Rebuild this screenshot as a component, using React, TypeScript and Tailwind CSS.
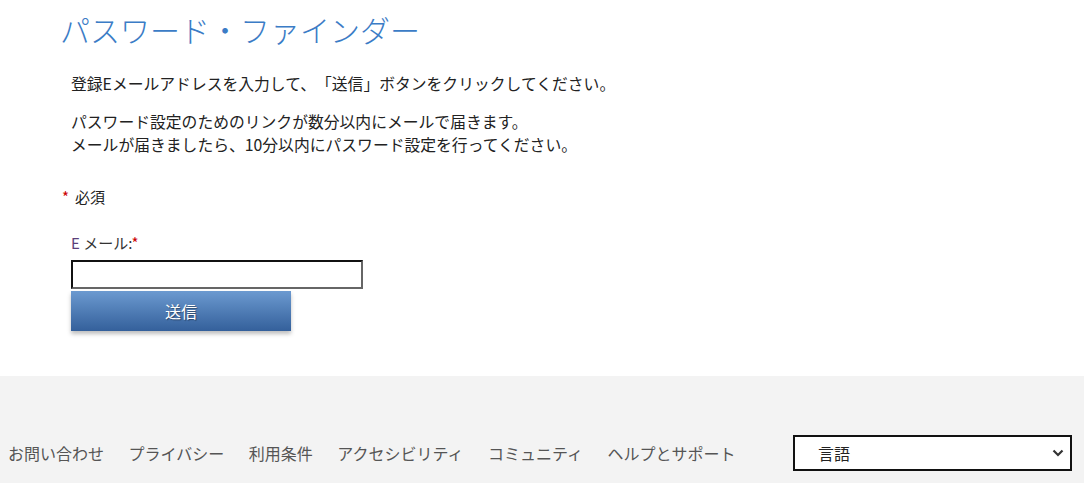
import React from "react";

const font = { fontFamily: '"Noto Sans CJK JP", "Noto Sans", sans-serif' };

export default function App() {
  return (
    <div className="w-[1084px] h-[483px] bg-white flex flex-col text-[#333] [text-spacing-trim:space-all]" style={font}>
      <div className="h-[376px] flex flex-col">
        <h1 className="ml-[60px] mt-[10px] text-[30px] leading-[38px] font-light text-[#3b7cc6]">
          パスワード・ファインダー
        </h1>
        <div className="ml-[71px] mt-[24px] text-[15.8px] leading-[23px] text-[#222]">
          <p>登録Eメールアドレスを入力して、「送信」ボタンをクリックしてください。</p>
          <p className="mt-[15px]">パスワード設定のためのリンクが数分以内にメールで届きます。</p>
          <p>メールが届きましたら、10分以内にパスワード設定を行ってください。</p>
        </div>
        <div className="ml-[62px] mt-[29px] text-[15px] leading-[23px] text-[#222]">
          <span className="text-[#c00] mr-[6px]">*</span>必須
        </div>
        <div className="ml-[71px] mt-[25px] flex flex-col items-start">
          <label className="text-[15px] leading-[20px] text-[#333]">
            <span className="text-[#5a3f7a]">E</span> メール:<span className="text-[#c00]">*</span>
          </label>
          <input
            type="text"
            className="mt-[7px] w-[292px] h-[29px] border-2 border-t-[#111] border-l-[#111] border-r-[#666] border-b-[#666] bg-white outline-none"
          />
          <button className="mt-[2px] w-[220px] h-[40px] bg-gradient-to-b from-[#6c9ad0] to-[#34609b] text-white text-[16px] shadow-[0_3px_4px_rgba(0,0,0,0.25)] [text-shadow:1px_1px_1px_rgba(0,0,0,0.4)]">
            送信
          </button>
        </div>
      </div>
      <div className="flex-1 bg-[#f3f3f3] flex items-start pt-[59px]">
        <nav className="ml-[8px] flex gap-[24.5px] text-[16px] leading-[36px] text-[#555]">
          <span>お問い合わせ</span>
          <span>プライバシー</span>
          <span>利用条件</span>
          <span>アクセシビリティ</span>
          <span>コミュニティ</span>
          <span>ヘルプとサポート</span>
        </nav>
        <div className="ml-auto mr-[12px] w-[279px] h-[36px] border-2 border-[#111] bg-white flex items-center pl-[23px] pr-[6px] text-[16px] text-[#222]">
          <span className="flex-1">言語</span>
          <svg width="12" height="8" viewBox="0 0 12 8">
            <path d="M1.5 1.5 L6 6 L10.5 1.5" stroke="#333" strokeWidth="2.2" fill="none" />
          </svg>
        </div>
      </div>
    </div>
  );
}
